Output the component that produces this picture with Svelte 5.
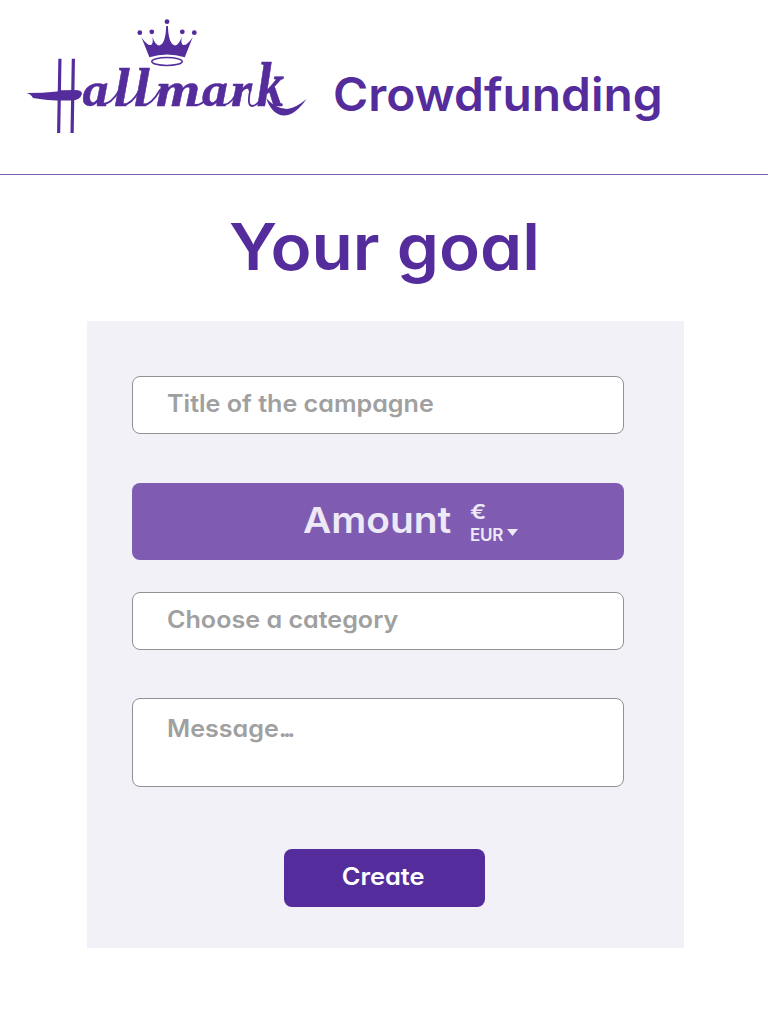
<script>
  const letters = [
    { c: 'a', x: 82.5, w: 1.06, h: 1 }, { c: 'l', x: 114, w: 1.15, h: 1.13 },
    { c: 'l', x: 134, w: 1.15, h: 1.13 }, { c: 'm', x: 156, w: 1.16, h: 1 },
    { c: 'a', x: 202, w: 1.06, h: 1 }, { c: 'r', x: 231, w: 1.1, h: 1 },
    { c: 'k', x: 257, w: 1.1, h: 1.3 }
  ];
</script>

<main>
  <header>
    <svg class="logo" viewBox="20 10 292 130" role="img" aria-label="Hallmark">
      <g class="crown">
        <circle cx="167" cy="21.7" r="2.4" />
        <circle cx="139.8" cy="32.7" r="2.4" />
        <circle cx="151.8" cy="31.8" r="2.4" />
        <circle cx="182.3" cy="31.8" r="2.4" />
        <circle cx="194.3" cy="32.7" r="2.4" />
        <path d="M141.4 37.2 Q147.5 46 151 45 Q153.6 43.5 152.4 37 Q155.5 45.5 159.3 45.5 Q165.6 44 166.2 26 H167.9 Q168.5 44 174.8 45.5 Q178.6 45.5 181.7 37 Q180.5 43.5 183.1 45 Q186.6 46 192.7 37.2 L184.8 57.3 Q167 51.5 149.4 57.3Z" />
        <ellipse cx="167" cy="61.5" rx="15.2" ry="4" fill="none" stroke="#552c9b" stroke-width="1.6" />
      </g>
      <text class="initial" transform="translate(54.8 133) skewX(-1) scale(.28 1)">H</text>
      {#each letters as l}
        <text class="script" transform={`translate(${l.x} 106) scale(${l.w} ${l.h})`}>{l.c}</text>
      {/each}
      <path class="join" d="M103 104 Q111 104 119 91 M123 105 Q132 104 139 91 M144 105 Q152 104 160 90 M196 105 Q202 105 207 98 M224 105 Q232 104 238 90 M250 91 Q247 106 252 106 Q257 106 263 96" />
      <path d="M26.5 93 Q43 93 57 91.5 L75 90 Q82 90 82 94 Q80 100 72 100.5 Q48 101 33 98 Q31 94 26.5 93Z" />
      <path d="M266 98 Q276 109 287 109 Q296 108 306.5 99 Q295 115.5 284 115.6 Q272 115 266 98Z" />
    </svg>
    <span class="brand">Crowdfunding</span>
  </header>
  <h1><span>Your goal</span></h1>
  <form onsubmit={(e) => e.preventDefault()}>
    <div class="field"><span class="text">Title of the campagne</span></div>
    <div class="amount">
      <span class="label">Amount</span>
      <span class="currency">
        <span class="sign">€</span>
        <span class="code"><span>EUR</span><svg width="11" height="7" viewBox="0 0 11 7"><path d="M0 0H11L5.5 7Z" /></svg></span>
      </span>
    </div>
    <div class="field category"><span class="text">Choose a category</span></div>
    <div class="field message"><span class="text">Message<span class="dots">...</span></span></div>
    <button><span>Create</span></button>
  </form>
</main>

<style>
  :global(body) { margin: 0; background: #fff; }
  main {
    min-height: 1024px;
    font-family: Inter, "Open Sans", sans-serif;
    font-feature-settings: "cv11";
    font-weight: 600;
    color: #552c9b;
  }
  header {
    box-sizing: border-box;
    height: 175px;
    padding: 10px 0 0 20px;
    display: flex;
    align-items: flex-start;
    border-bottom: 1px solid #7f5db5;
  }
  .logo { width: 292px; height: 130px; fill: #552c9b; flex: none; overflow: visible; }
  .initial { font: 500 102px Inter, sans-serif; }
  .script { font: italic bold 49px "Liberation Serif", serif; stroke: #552c9b; stroke-width: .5; }
  .join { fill: none; stroke: #552c9b; stroke-width: 1.8; stroke-linecap: round; }
  .brand {
    margin: 56px 0 0 21px;
    font-size: 46px;
    line-height: 56px;
    white-space: nowrap;
    transform: scaleX(1.04);
    transform-origin: 0 50%;
  }
  h1 {
    margin: 32px 0 0;
    height: 80px;
    text-align: center;
    font-size: 64px;
    font-weight: 600;
    line-height: 80px;
  }
  h1 span { display: inline-block; transform: scaleX(1.055); }
  form {
    box-sizing: border-box;
    width: 597px;
    height: 627px;
    margin: 34px 0 0 87px;
    padding: 55px 60px 0 45px;
    background: #f2f1f8;
    display: flex;
    flex-direction: column;
  }
  .field {
    box-sizing: border-box;
    height: 58px;
    padding: 12px 33.5px;
    border: 1px solid #909095;
    border-radius: 8px;
    background: #fff;
    color: #a0a0a0;
    font-size: 24px;
    line-height: 30px;
    white-space: nowrap;
  }
  .text { display: inline-block; transform: scaleX(1.046); transform-origin: 0 50%; }
  .dots { letter-spacing: -3.6px; }
  .amount {
    height: 77px;
    margin: 49px 0 32px;
    border-radius: 8px;
    background: #7f5cb2;
    color: #eee9f6;
    display: flex;
    align-items: flex-start;
  }
  .label {
    margin: 14px 0 0 171px;
    width: 167px;
    font-size: 36px;
    font-weight: 600;
    line-height: 46px;
    transform: scaleX(1.08);
    transform-origin: 0 50%;
  }
  .currency { display: flex; flex-direction: column; padding-top: 18px; }
  .sign { font-size: 20px; line-height: 23px; transform: scaleX(1.2); transform-origin: 0 50%; }
  .code { display: flex; align-items: center; gap: 4px; font-size: 17px; line-height: 22px; letter-spacing: -.3px; }
  .code svg { fill: #eee9f6; margin-bottom: 5px; }
  .message { height: 89px; margin-top: 48px; padding-top: 15px; }
  button {
    width: 201px;
    height: 58px;
    margin: 62px 0 0 152px;
    padding: 0 2px 3px 0;
    border: 0;
    border-radius: 8px;
    background: #552c9b;
    color: #fff;
    font: inherit;
    font-size: 24px;
  }
  button span { display: inline-block; transform: scaleX(1.06); }
</style>
